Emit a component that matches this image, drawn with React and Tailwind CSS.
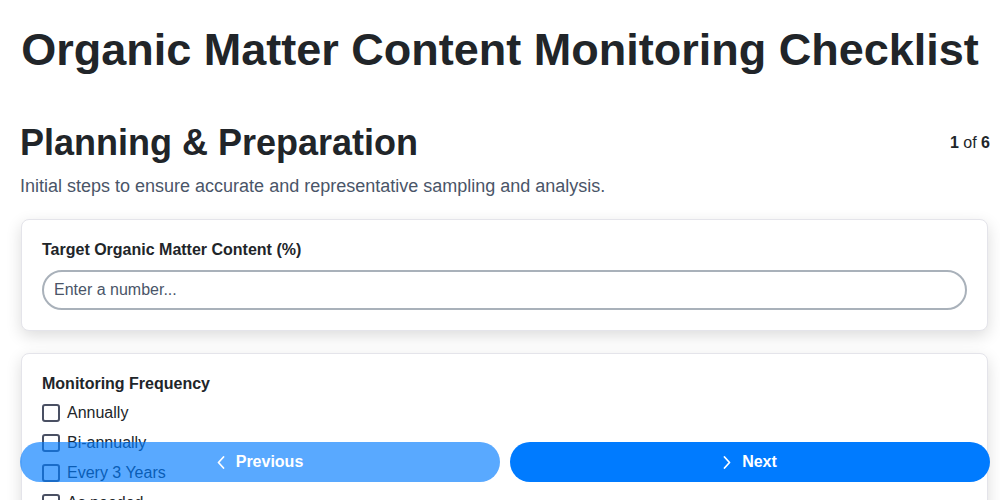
const FREQUENCIES = ['Annually', 'Bi-annually', 'Every 3 Years', 'As needed']

function Chevron({ dir }) {
  return (
    <svg width="8" height="13" viewBox="0 0 8 13" fill="none" stroke="currentColor" strokeWidth="1.75" strokeLinecap="round" strokeLinejoin="round">
      {dir === 'left' ? <path d="M6.5 1 L1.5 6.5 L6.5 12" /> : <path d="M1.5 1 L6.5 6.5 L1.5 12" />}
    </svg>
  )
}

export default function App() {
  return (
    <div className="min-h-screen bg-white font-['Liberation_Sans',Arial,sans-serif] text-[#212529]">
      <h1 className="whitespace-nowrap pt-[22px] text-center text-[45px] font-bold leading-[55px]">
        Organic Matter Content Monitoring Checklist
      </h1>

      <div className="pl-5 pr-[10px] pb-24">
        {/* Section header */}
        <div className="mt-[44px] flex items-center justify-between">
          <h2 className="text-4xl font-bold leading-[43px]">Planning &amp; Preparation</h2>
          <span className="text-base">
            <b>1</b> of <b>6</b>
          </span>
        </div>
        <p className="mt-[9px] text-lg leading-[27px] text-[#4a5568]">
          Initial steps to ensure accurate and representative sampling and analysis.
        </p>

        {/* Target input */}
        <div className="mt-[19px] ml-px mr-[2px] rounded-lg border border-[#e4e4ea] bg-white p-5 shadow-[0_5px_16px_rgba(0,0,0,0.14)]">
          <label className="block text-base font-bold leading-[19px]">
            Target Organic Matter Content (%)
          </label>
          <input
            type="text"
            placeholder="Enter a number..."
            className="mt-[11px] block h-10 w-full rounded-full border-2 border-[#a9b1ba] px-[10px] text-base text-[#212529] outline-none placeholder:text-[#4a5568]"
          />
        </div>

        {/* Frequency */}
        <div className="mt-[22px] ml-px mr-[2px] rounded-lg border border-[#e4e4ea] bg-white p-5 shadow-[0_5px_16px_rgba(0,0,0,0.14)]">
          <label className="block text-base font-bold leading-[19px]">Monitoring Frequency</label>
          <div className="mt-[5px] flex flex-col">
            {FREQUENCIES.map((f) => (
              <label key={f} className="flex h-[30px] items-center gap-[7px] text-base">
                <span className="block h-[18px] w-[18px] rounded-[3px] border-2 border-[#4a5063]" />
                {f}
              </label>
            ))}
          </div>
        </div>
      </div>

      {/* Bottom navigation */}
      <div className="fixed bottom-[18px] left-5 right-[10px] flex gap-[10px]">
        <button className="flex h-10 flex-1 items-center justify-center gap-[11px] rounded-full bg-[#007bff] text-base font-bold text-white opacity-65">
          <Chevron dir="left" />
          Previous
        </button>
        <button className="flex h-10 flex-1 items-center justify-center gap-[11px] rounded-full bg-[#007bff] text-base font-bold text-white">
          <Chevron dir="right" />
          Next
        </button>
      </div>
    </div>
  )
}
